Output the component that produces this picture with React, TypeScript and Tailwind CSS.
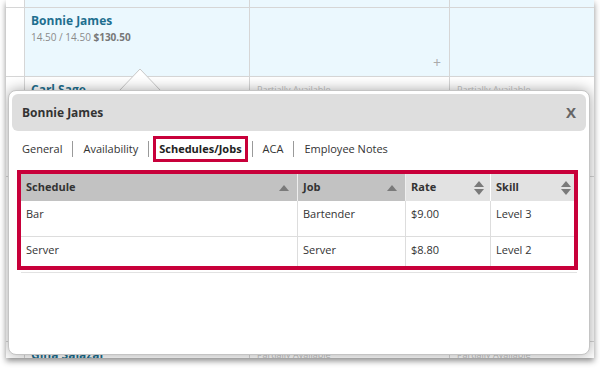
import React from "react";

const Up = () => (
  <svg width="10" height="6" viewBox="0 0 10 6"><path d="M0 6 L5 0 L10 6 Z" fill="#7a7a7a" /></svg>
);
const UpDown = () => (
  <svg width="10" height="14" viewBox="0 0 10 14">
    <path d="M0 6 L5 0 L10 6 Z" fill="#7a7a7a" />
    <path d="M0 8 L5 14 L10 8 Z" fill="#7a7a7a" />
  </svg>
);

function GridRow({ name, h, blue, sub, plus }: { name: string; h: string; blue?: boolean; sub?: boolean; plus?: boolean }) {
  return (
    <div className={`flex ${h} border-b border-[#d6d6d6]`}>
      <div className="w-[18px] bg-white" />
      <div className={`w-[225px] border-l border-[#d6d6d6] px-[6px] pt-[4px] ${blue ? "bg-[#ebf8fe]" : "bg-white"}`}>
        {name && <div className="text-[12px] font-bold text-[#1e6f8f] leading-[18px]">{name}</div>}
        {sub && (
          <div className="text-[10px] text-[#8a8a8a] leading-[14px]">
            14.50 / 14.50 <span className="font-bold text-[#777]">$130.50</span>
          </div>
        )}
      </div>
      <div className={`relative w-[200px] border-l border-[#d6d6d6] ${blue ? "bg-[#ebf8fe]" : "bg-white"}`}>
        {plus && <span className="absolute right-[8px] bottom-[6px] text-[14px] text-[#aaa] leading-none">+</span>}
        {!blue && name && <div className="pl-[7px] pt-[6px] text-[9px] text-[#c4c4c4]">Partially Available</div>}
      </div>
      <div className={`flex-1 border-l border-[#d6d6d6] ${blue ? "bg-[#ebf8fe]" : "bg-white"}`}>
        {!blue && name && <div className="pl-[7px] pt-[6px] text-[9px] text-[#c4c4c4]">Partially Available</div>}
      </div>
    </div>
  );
}

export default function App() {
  const tabs = ["General", "Availability", "Schedules/Jobs", "ACA", "Employee Notes"];
  return (
    <div className="w-[600px] h-[368px] bg-white overflow-hidden" style={{ fontFamily: '"Open Sans", sans-serif' }}>
      <div className="relative ml-[6px] w-[588px] h-[358px] bg-white overflow-hidden shadow-[0_3px_6px_rgba(0,0,0,0.45)]">
        <div className="flex flex-col">
          <GridRow name="" h="h-[8px]" blue />
          <GridRow name="Bonnie James" h="h-[69px]" blue sub plus />
          <GridRow name="Carl Sage" h="h-[100px]" />
          <GridRow name="" h="h-[165px]" />
          <GridRow name="Gina Salazar" h="h-[40px]" />
        </div>

        {/* arrow */}
        <svg className="absolute left-[113px] top-[68px]" width="42" height="24" viewBox="0 0 42 24">
          <path d="M0 23 L21 1 L42 23 Z" fill="#fff" stroke="#c8c8c8" strokeWidth="1" />
        </svg>

        {/* popover */}
        <div className="absolute left-[2px] top-[90px] w-[582px] h-[265px] bg-white rounded-[8px] border border-[#c4c4c4] shadow-[0_0_14px_rgba(0,0,0,0.35)] p-[3px]">
          <div className="h-[37px] rounded-[6px] bg-[#dedede] flex items-center justify-between pl-[10px] pr-[10px]">
            <span className="text-[12px] font-bold text-[#333]">Bonnie James</span>
            <span className="text-[15px] font-bold text-[#666]">X</span>
          </div>
          <div className="flex items-center h-[30px] mt-[3px] pl-[10px] text-[11px] text-[#333]">
            {tabs.map((t, i) => (
              <React.Fragment key={t}>
                {i > 0 && <span className="w-px h-[16px] bg-[#9a9a9a] mx-[10px]" />}
                {t === "Schedules/Jobs" ? (
                  <span className="-mx-[6px] border-[3px] border-[#c8003a] px-[3px] py-[2px] font-bold text-[#222]">{t}</span>
                ) : (
                  <span>{t}</span>
                )}
              </React.Fragment>
            ))}
          </div>
          <div className="mt-[6px] ml-[5px] w-[561px] border-[4px] border-[#c8003a] bg-white">
            <div className="text-[11px] text-[#333]">
              <div className="flex h-[27px] font-bold">
                <div className="w-[277px] bg-[#c2c2c2] flex items-center justify-between pl-[5px] pr-[8px] border-r border-[#eee]">
                  <span>Schedule</span><Up />
                </div>
                <div className="w-[108px] bg-[#c2c2c2] flex items-center justify-between pl-[5px] pr-[8px] border-r border-[#eee]">
                  <span>Job</span><Up />
                </div>
                <div className="w-[85px] bg-[#e2e2e2] flex items-center justify-between pl-[5px] pr-[6px] border-r border-[#fff]">
                  <span>Rate</span><UpDown />
                </div>
                <div className="flex-1 bg-[#e2e2e2] flex items-center justify-between pl-[5px] pr-[3px]">
                  <span>Skill</span><UpDown />
                </div>
              </div>
              {[["Bar", "Bartender", "$9.00", "Level 3", "h-[36px]"], ["Server", "Server", "$8.80", "Level 2", "h-[29px]"]].map((r, i) => (
                <div key={i} className={`flex ${r[4]} ${i === 0 ? "border-b border-[#ddd]" : ""}`}>
                  <div className="w-[277px] pl-[5px] pt-[5px] border-r border-[#ddd]">{r[0]}</div>
                  <div className="w-[108px] pl-[5px] pt-[5px] border-r border-[#ddd]">{r[1]}</div>
                  <div className="w-[85px] pl-[5px] pt-[5px] border-r border-[#ddd]">{r[2]}</div>
                  <div className="flex-1 pl-[5px] pt-[5px]">{r[3]}</div>
                </div>
              ))}
            </div>
          </div>
          <div className="ml-[9px] w-[556px] h-px bg-[#e2e2e2] mt-[2px]" />
        </div>
      </div>
    </div>
  );
}
